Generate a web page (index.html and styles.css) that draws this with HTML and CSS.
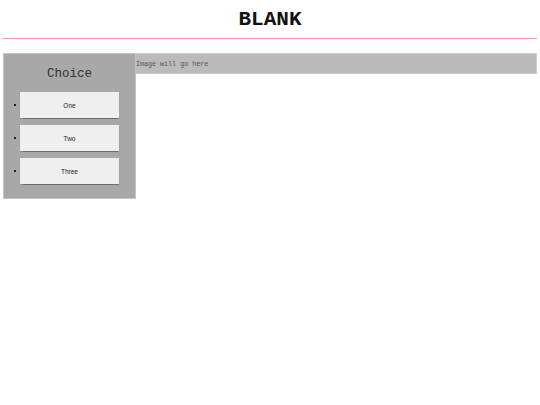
FILE: index.html
```html
<!DOCTYPE html>
<html>
<head>
<meta charset="utf-8">
<link rel="stylesheet" href="styles.css">
</head>
<body>
<header class="top">
  <h1 class="title">BLANK</h1>
</header>
<main class="content">
  <aside class="side">
    <h2 class="side-title">Choice</h2>
    <ul class="choices">
      <li><button class="btn">One</button></li>
      <li><button class="btn">Two</button></li>
      <li><button class="btn">Three</button></li>
    </ul>
  </aside>
  <section class="image">Image will go here</section>
</main>
</body>
</html>
```
FILE: styles.css
```css
html, body { margin: 0; padding: 0; background: #fff; }
body { padding: 0 3px; font-family: "Courier New", Courier, "Nimbus Mono PS", "FreeMono", "Liberation Mono", monospace; }
.top {
  border-bottom: 1.5px solid #e99;
  height: 38px;
  display: flex;
  align-items: center;
  justify-content: center;
}
.title {
  margin: 0;
  font-size: 21px;
  font-weight: bold;
  color: #111;
  line-height: 1;
}
.content {
  display: flex;
  align-items: flex-start;
  margin-top: 14px;
}
.side {
  width: 131px;
  background: #a8a8a8;
  border: 1px solid #c4c4c4;
  padding: 0 0 14px 0;
}
.side-title {
  margin: 0;
  text-align: center;
  font-weight: normal;
  font-size: 12.5px;
  color: #333;
  padding-top: 13px;
  height: 25px;
}
.choices {
  margin: 0;
  padding: 0 0 0 10px;
  list-style: none;
}
.choices li {
  display: flex;
  align-items: center;
  margin-top: 7px;
}
.choices li:first-child { margin-top: 0; }
.choices li::before {
  content: "";
  width: 2px;
  height: 2px;
  background: #222;
  margin-right: 4px;
}
.btn {
  width: 99px;
  height: 26px;
  background: #efefef;
  border: none;
  box-shadow: 0 0.5px 1px rgba(0,0,0,0.35);
  font-family: "Liberation Sans", Arial, sans-serif;
  font-size: 6.5px;
  color: #222;
  padding: 0;
}
.image {
  flex: 1;
  background: #bbb;
  border: 1px solid #ccc;
  border-left: none;
  height: 19px;
  display: flex;
  align-items: center;
  font-size: 6.7px;
  color: #555;
}
```
